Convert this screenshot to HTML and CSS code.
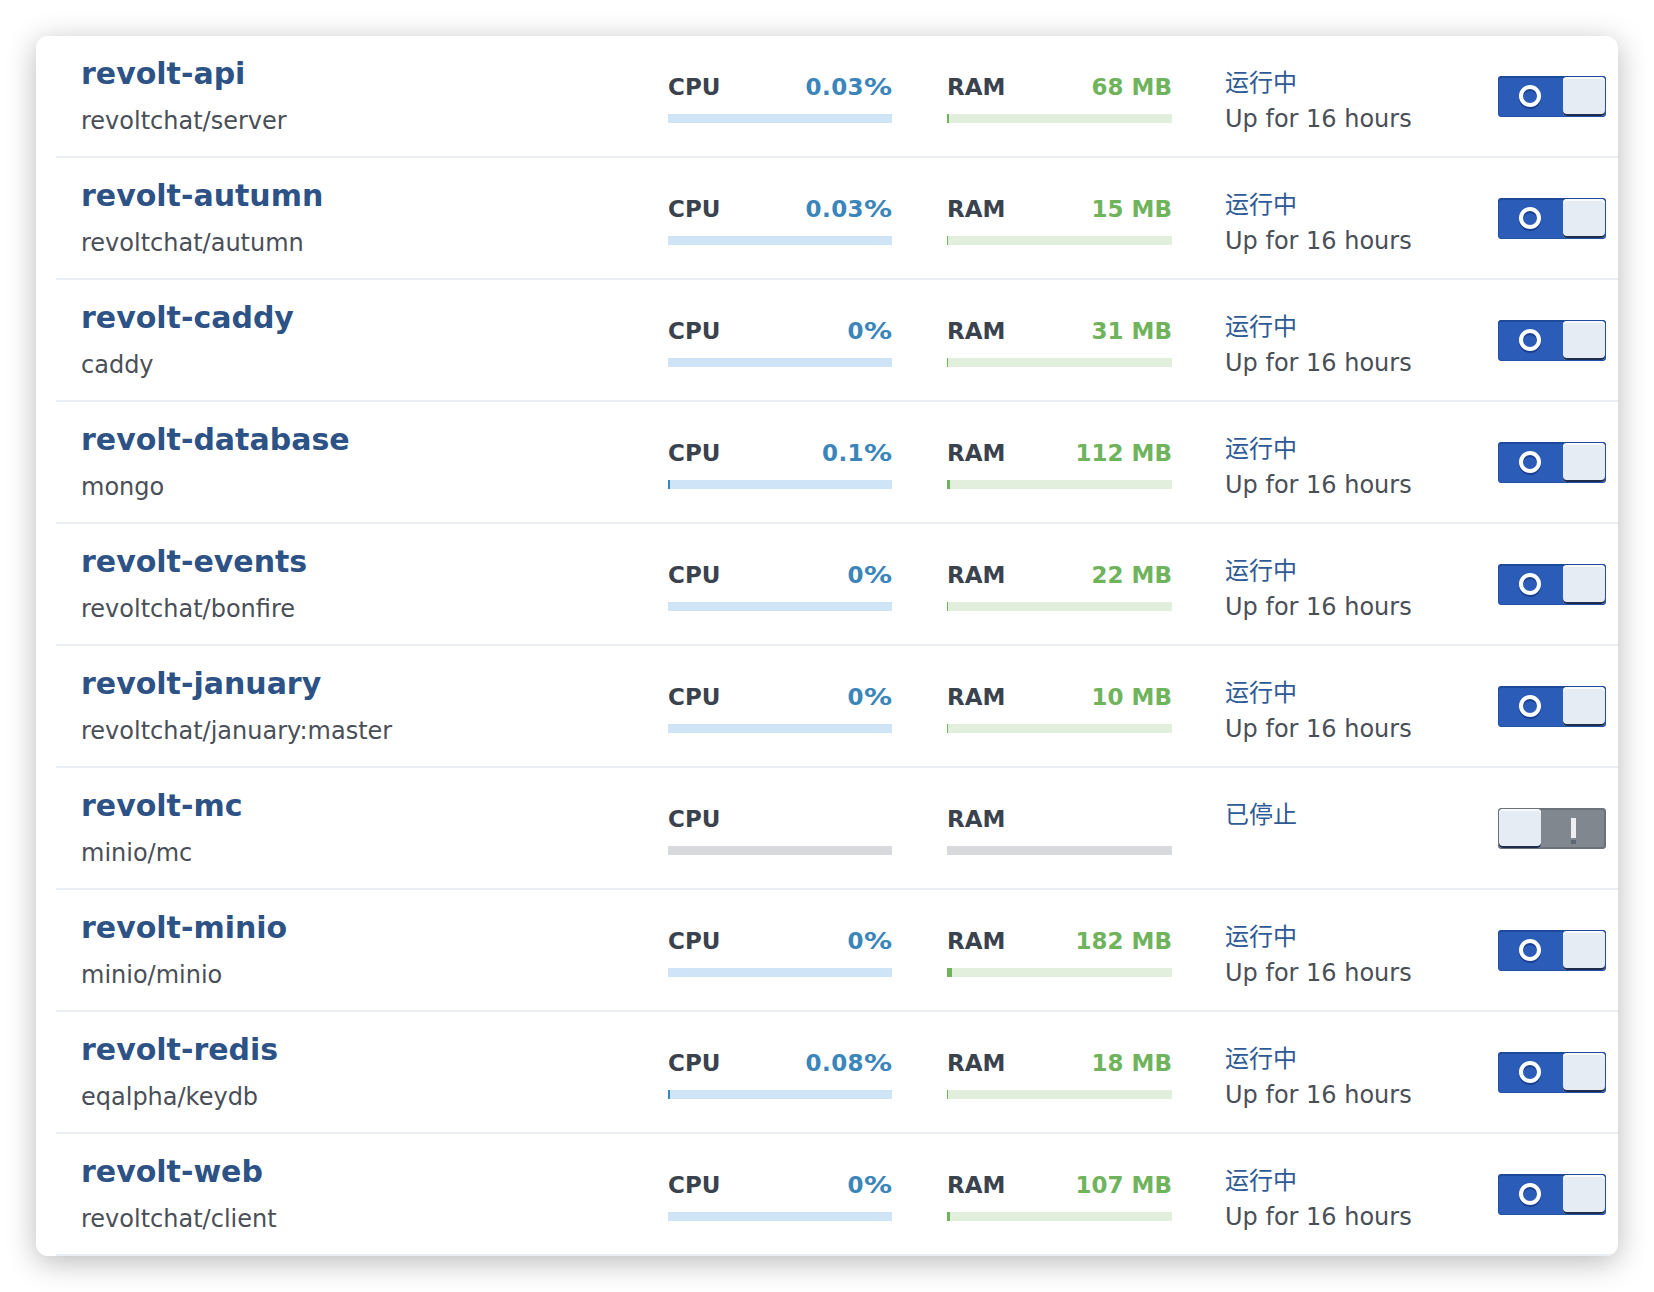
FILE: index.html
```html
<!DOCTYPE html>
<html lang="zh">
<head>
<meta charset="utf-8">
<title>Containers</title>
<link rel="stylesheet" href="styles.css">
</head>
<body>
<div class="card">
  <div class="row">
    <div class="info"><div class="name">revolt-api</div><div class="image">revoltchat/server</div></div>
    <div class="stat cpu"><div class="head"><span class="label">CPU</span><span class="val">0.03<span class="pct">%</span></span></div><div class="bar"><div class="fill" style="width:0px"></div></div></div>
    <div class="stat ram"><div class="head"><span class="label">RAM</span><span class="val">68 MB</span></div><div class="bar"><div class="fill" style="width:2px"></div></div></div>
    <div class="status"><div class="state">运行中</div><div class="uptime">Up for 16 hours</div></div>
    <div class="toggle on"><span class="ring"></span><span class="knob"></span></div>
  </div>
  <div class="row">
    <div class="info"><div class="name">revolt-autumn</div><div class="image">revoltchat/autumn</div></div>
    <div class="stat cpu"><div class="head"><span class="label">CPU</span><span class="val">0.03<span class="pct">%</span></span></div><div class="bar"><div class="fill" style="width:0px"></div></div></div>
    <div class="stat ram"><div class="head"><span class="label">RAM</span><span class="val">15 MB</span></div><div class="bar"><div class="fill" style="width:1px"></div></div></div>
    <div class="status"><div class="state">运行中</div><div class="uptime">Up for 16 hours</div></div>
    <div class="toggle on"><span class="ring"></span><span class="knob"></span></div>
  </div>
  <div class="row">
    <div class="info"><div class="name">revolt-caddy</div><div class="image">caddy</div></div>
    <div class="stat cpu"><div class="head"><span class="label">CPU</span><span class="val">0<span class="pct">%</span></span></div><div class="bar"><div class="fill" style="width:0px"></div></div></div>
    <div class="stat ram"><div class="head"><span class="label">RAM</span><span class="val">31 MB</span></div><div class="bar"><div class="fill" style="width:1px"></div></div></div>
    <div class="status"><div class="state">运行中</div><div class="uptime">Up for 16 hours</div></div>
    <div class="toggle on"><span class="ring"></span><span class="knob"></span></div>
  </div>
  <div class="row">
    <div class="info"><div class="name">revolt-database</div><div class="image">mongo</div></div>
    <div class="stat cpu"><div class="head"><span class="label">CPU</span><span class="val">0.1<span class="pct">%</span></span></div><div class="bar"><div class="fill" style="width:2px"></div></div></div>
    <div class="stat ram"><div class="head"><span class="label">RAM</span><span class="val">112 MB</span></div><div class="bar"><div class="fill" style="width:3px"></div></div></div>
    <div class="status"><div class="state">运行中</div><div class="uptime">Up for 16 hours</div></div>
    <div class="toggle on"><span class="ring"></span><span class="knob"></span></div>
  </div>
  <div class="row">
    <div class="info"><div class="name">revolt-events</div><div class="image">revoltchat/bonfire</div></div>
    <div class="stat cpu"><div class="head"><span class="label">CPU</span><span class="val">0<span class="pct">%</span></span></div><div class="bar"><div class="fill" style="width:0px"></div></div></div>
    <div class="stat ram"><div class="head"><span class="label">RAM</span><span class="val">22 MB</span></div><div class="bar"><div class="fill" style="width:1px"></div></div></div>
    <div class="status"><div class="state">运行中</div><div class="uptime">Up for 16 hours</div></div>
    <div class="toggle on"><span class="ring"></span><span class="knob"></span></div>
  </div>
  <div class="row">
    <div class="info"><div class="name">revolt-january</div><div class="image">revoltchat/january:master</div></div>
    <div class="stat cpu"><div class="head"><span class="label">CPU</span><span class="val">0<span class="pct">%</span></span></div><div class="bar"><div class="fill" style="width:0px"></div></div></div>
    <div class="stat ram"><div class="head"><span class="label">RAM</span><span class="val">10 MB</span></div><div class="bar"><div class="fill" style="width:1px"></div></div></div>
    <div class="status"><div class="state">运行中</div><div class="uptime">Up for 16 hours</div></div>
    <div class="toggle on"><span class="ring"></span><span class="knob"></span></div>
  </div>
  <div class="row">
    <div class="info"><div class="name">revolt-mc</div><div class="image">minio/mc</div></div>
    <div class="stat cpu off"><div class="head"><span class="label">CPU</span><span class="val"></span></div><div class="bar"></div></div>
    <div class="stat ram off"><div class="head"><span class="label">RAM</span><span class="val"></span></div><div class="bar"></div></div>
    <div class="status"><div class="state">已停止</div></div>
    <div class="toggle off"><span class="knob"></span><span class="bang"><span class="bang-bar"></span><span class="bang-dot"></span></span></div>
  </div>
  <div class="row">
    <div class="info"><div class="name">revolt-minio</div><div class="image">minio/minio</div></div>
    <div class="stat cpu"><div class="head"><span class="label">CPU</span><span class="val">0<span class="pct">%</span></span></div><div class="bar"><div class="fill" style="width:0px"></div></div></div>
    <div class="stat ram"><div class="head"><span class="label">RAM</span><span class="val">182 MB</span></div><div class="bar"><div class="fill" style="width:5px"></div></div></div>
    <div class="status"><div class="state">运行中</div><div class="uptime">Up for 16 hours</div></div>
    <div class="toggle on"><span class="ring"></span><span class="knob"></span></div>
  </div>
  <div class="row">
    <div class="info"><div class="name">revolt-redis</div><div class="image">eqalpha/keydb</div></div>
    <div class="stat cpu"><div class="head"><span class="label">CPU</span><span class="val">0.08<span class="pct">%</span></span></div><div class="bar"><div class="fill" style="width:2px"></div></div></div>
    <div class="stat ram"><div class="head"><span class="label">RAM</span><span class="val">18 MB</span></div><div class="bar"><div class="fill" style="width:1px"></div></div></div>
    <div class="status"><div class="state">运行中</div><div class="uptime">Up for 16 hours</div></div>
    <div class="toggle on"><span class="ring"></span><span class="knob"></span></div>
  </div>
  <div class="row">
    <div class="info"><div class="name">revolt-web</div><div class="image">revoltchat/client</div></div>
    <div class="stat cpu"><div class="head"><span class="label">CPU</span><span class="val">0<span class="pct">%</span></span></div><div class="bar"><div class="fill" style="width:0px"></div></div></div>
    <div class="stat ram"><div class="head"><span class="label">RAM</span><span class="val">107 MB</span></div><div class="bar"><div class="fill" style="width:3px"></div></div></div>
    <div class="status"><div class="state">运行中</div><div class="uptime">Up for 16 hours</div></div>
    <div class="toggle on"><span class="ring"></span><span class="knob"></span></div>
  </div>
</div>
</body>
</html>
```
FILE: styles.css
```css
html, body {
  margin: 0;
  padding: 0;
  background: #ffffff;
}
body {
  padding: 36px;
  font-family: "DejaVu Sans", Verdana, sans-serif;
}
.card {
  background: #ffffff;
  border-radius: 12px;
  box-shadow: 0 6px 30px rgba(0, 0, 0, 0.28);
  padding-left: 20px;
  overflow: hidden;
}
.row {
  display: flex;
  align-items: flex-start;
  height: 120px;
  border-bottom: 2px solid #ebeff4;
  padding: 0 12px 0 25px;
}
.info {
  flex: 1;
  padding-top: 20px;
}
.name {
  font-size: 30px;
  line-height: 36px;
  font-weight: bold;
  color: #2d5286;
}
.image {
  margin-top: 13px;
  font-size: 24px;
  line-height: 32px;
  color: #4a4f57;
}
.stat {
  padding-top: 37px;
}
.stat.cpu {
  width: 224px;
}
.stat.ram {
  width: 225px;
  margin-left: 55px;
}
.head {
  display: flex;
  justify-content: space-between;
  font-size: 23px;
  line-height: 28px;
  font-weight: bold;
}
.label {
  color: #3a424d;
}
.cpu .val {
  color: #3a86bb;
  letter-spacing: 0.4px;
}
.pct {
  display: inline-block;
  margin-left: 5px;
  transform: scaleX(1.22);
  transform-origin: right center;
  letter-spacing: 0;
}
.ram .val {
  color: #6fb45c;
}
.bar {
  margin-top: 13px;
  height: 9px;
  background: #d0e4f7;
  display: flex;
}
.ram .bar {
  background: #e2efdc;
}
.stat.off .bar {
  background: #d7d9dd;
}
.fill {
  height: 100%;
}
.cpu .fill {
  background: #3a86bb;
}
.ram .fill {
  background: #6fb45c;
}
.status {
  width: 273px;
  margin-left: 53px;
  padding-top: 30px;
}
.state {
  font-family: "Noto Sans CJK SC", sans-serif;
  font-size: 24px;
  line-height: 30px;
  color: #2e5a96;
}
.uptime {
  margin-top: 7px;
  font-size: 24px;
  line-height: 32px;
  color: #4a4f57;
}
.toggle {
  align-self: center;
  box-sizing: border-box;
  width: 108px;
  height: 41px;
  padding: 1px;
  border-radius: 4px;
  display: flex;
  align-items: center;
}
.toggle.on {
  background: #2a5cb8;
  box-shadow: inset 0 2px 0 #1e4a9c, inset 0 0 0 1px #2151a8;
}
.toggle.off {
  background: #80878f;
  box-shadow: inset 0 0 0 2px #6b727a;
}
.ring {
  box-sizing: border-box;
  width: 22px;
  height: 22px;
  margin-left: 20px;
  border: 4px solid #ffffff;
  border-radius: 50%;
  box-shadow: 0 2px 0 #1b3f8f, inset 0 2px 0 #1b3f8f;
}
.knob {
  box-sizing: border-box;
  width: 42px;
  height: 39px;
  border-radius: 4px;
  background: #e6ecf4;
  box-shadow: inset 0 2px 0 #f7f9fc, inset 0 -2px 0 #1f2d4a;
}
.toggle.on .knob {
  margin-left: auto;
}
.bang {
  flex: 1;
  display: flex;
  flex-direction: column;
  align-items: center;
  margin-top: 5px;
}
.bang-bar {
  width: 5px;
  height: 20px;
  background: #eceef2;
}
.bang-dot {
  width: 5px;
  height: 4px;
  margin-top: 2px;
  background: #5c6573;
}
```
